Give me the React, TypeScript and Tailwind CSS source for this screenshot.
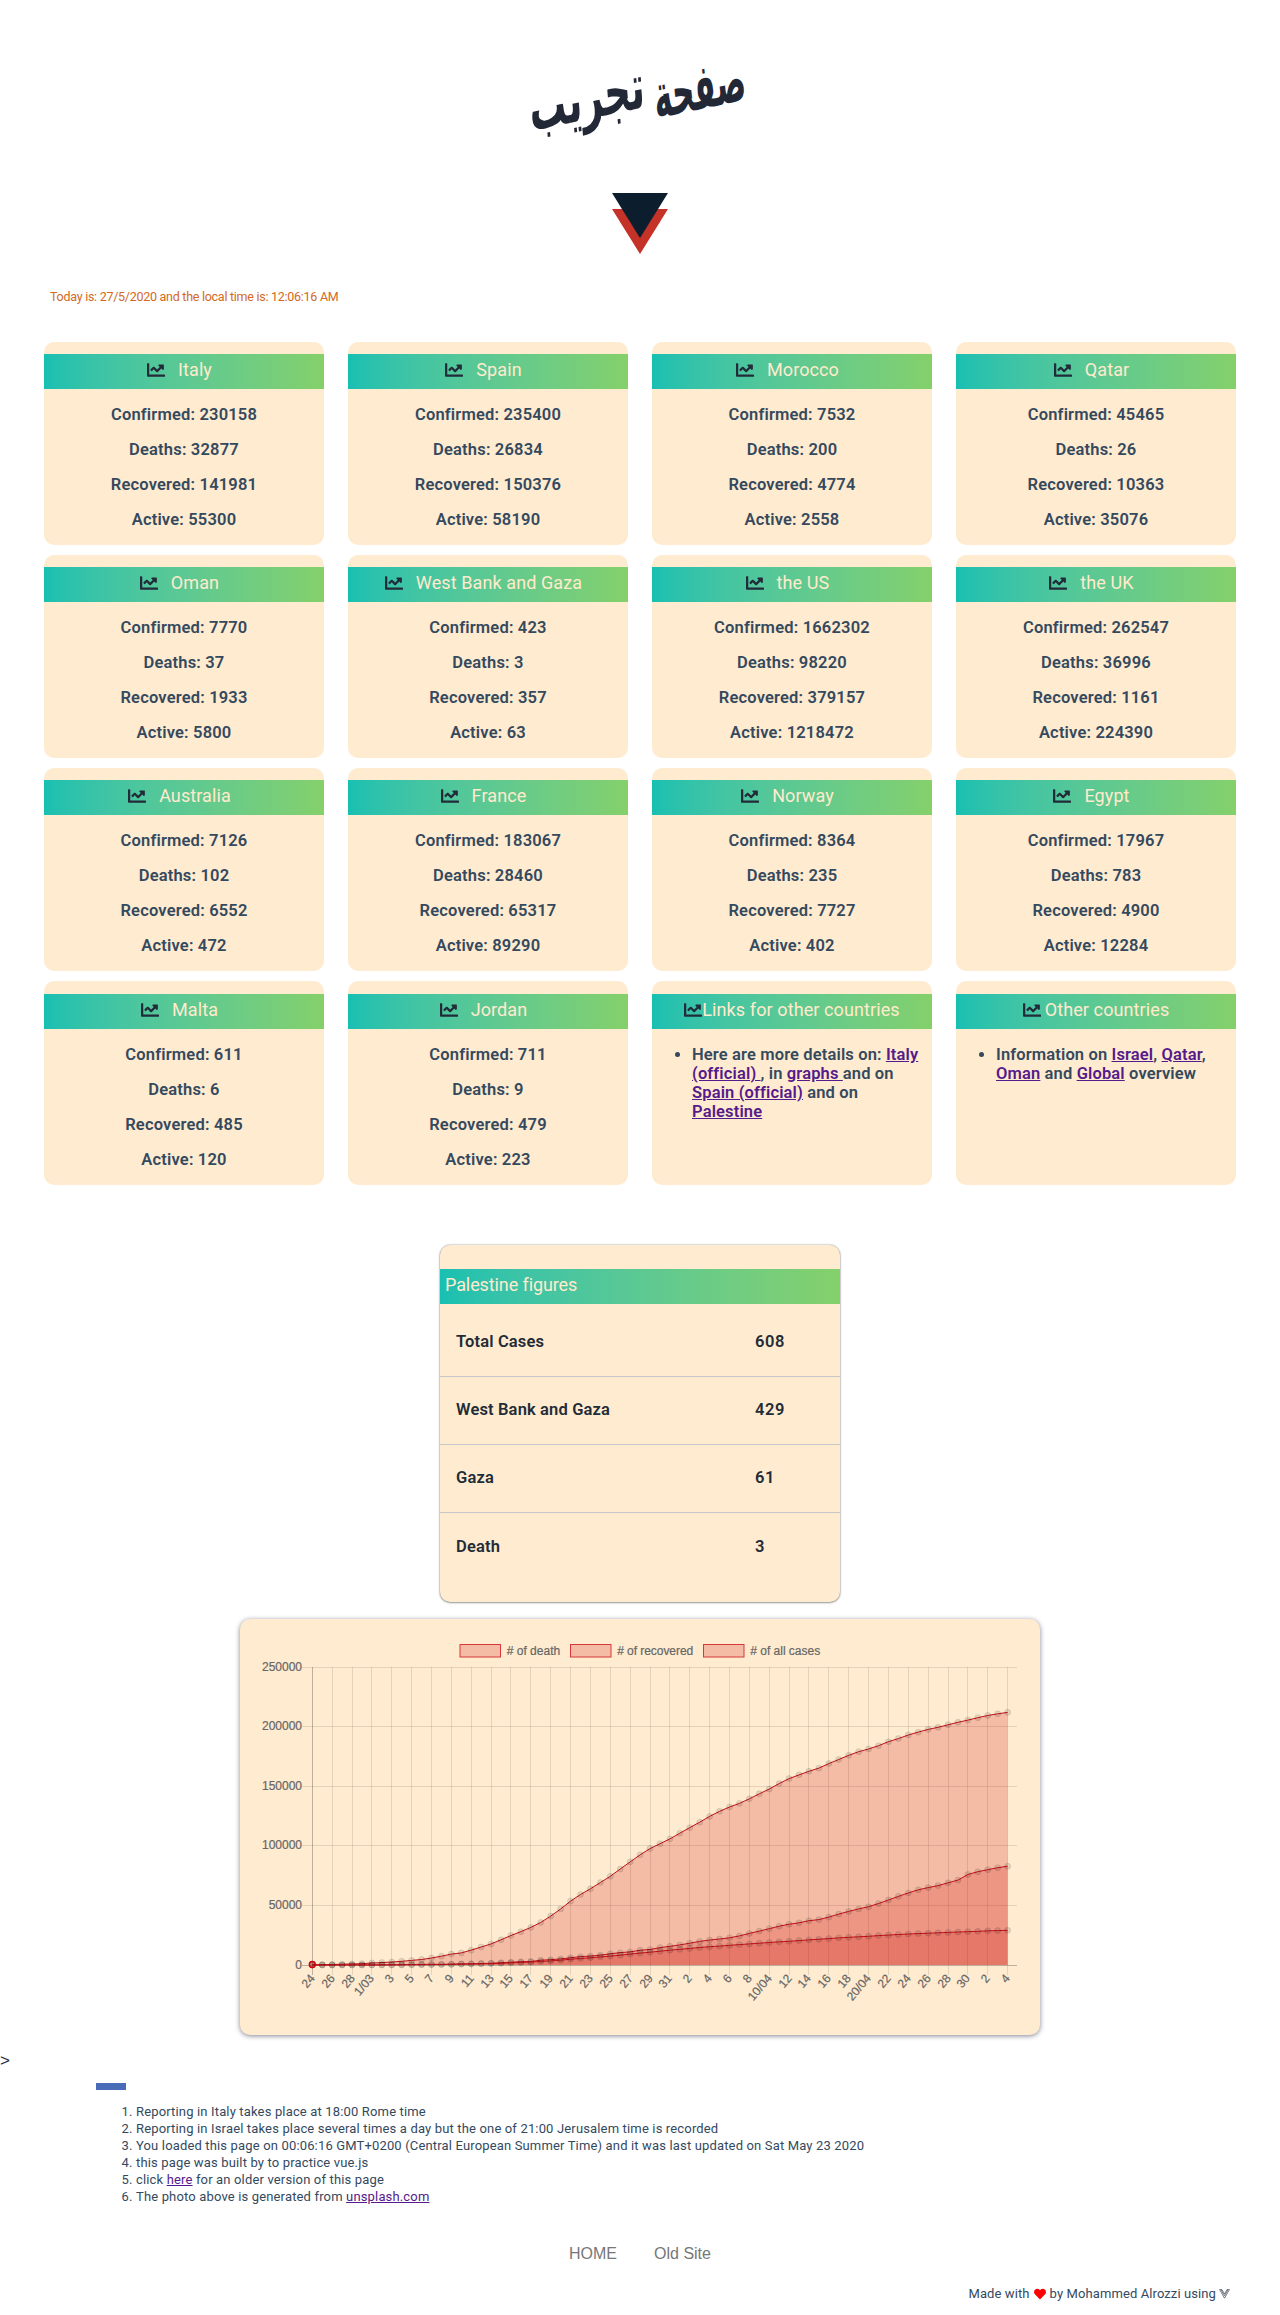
import React from "react";
import { FaChartLine, FaHeart } from "react-icons/fa";

const countries: [string, number, number, number, number][] = [
  ["Italy", 230158, 32877, 141981, 55300],
  ["Spain", 235400, 26834, 150376, 58190],
  ["Morocco", 7532, 200, 4774, 2558],
  ["Qatar", 45465, 26, 10363, 35076],
  ["Oman", 7770, 37, 1933, 5800],
  ["West Bank and Gaza", 423, 3, 357, 63],
  ["the US", 1662302, 98220, 379157, 1218472],
  ["the UK", 262547, 36996, 1161, 224390],
  ["Australia", 7126, 102, 6552, 472],
  ["France", 183067, 28460, 65317, 89290],
  ["Norway", 8364, 235, 7727, 402],
  ["Egypt", 17967, 783, 4900, 12284],
  ["Malta", 611, 6, 485, 120],
  ["Jordan", 711, 9, 479, 223],
];

const allCases = [229,322,400,650,888,1128,1694,2036,2502,3089,3858,4636,5883,7375,9172,10149,12462,15113,17660,21157,24747,27980,31506,35713,41035,47021,53578,59138,63927,69176,74386,80539,86498,92472,97689,101739,105792,110574,115242,119827,124632,128948,132547,135586,139422,143626,147577,152271,156363,159516,162488,165155,168941,172434,175925,178972,181228,183957,187327,189973,192994,195351,197675,199414,201505,203591,205463,207428,209328,210717,211938];
const recovered = [1,1,3,45,46,50,83,149,160,276,414,523,589,622,724,1004,1045,1258,1439,1966,2335,2749,2941,4025,4440,5129,6072,7024,7432,8326,9362,10361,10950,12384,13030,14620,15729,16847,18278,19758,20996,21815,22837,24392,26491,28470,30455,32534,34211,35435,37130,38092,40164,42727,44927,47055,48877,51600,54543,57576,60498,63120,64928,66624,68941,71252,75945,78249,79914,81654,82879];
const deaths = [7,10,12,17,21,29,34,52,79,107,148,197,233,366,463,631,827,1016,1266,1441,1809,2158,2503,2978,3405,4032,4825,5476,6077,6820,7503,8215,9134,10023,10779,11591,12428,13155,13915,14681,15362,15887,16523,17127,17669,18279,18849,19468,19899,20465,21067,21645,22170,22745,23227,23660,24114,24648,25085,25549,25969,26384,26644,26977,27359,27682,27967,28236,28710,28884,29079];
const dayLabels = ["24","26","28","1/03","3","5","7","9","11","13","15","17","19","21","23","25","27","29","31","2","4","6","8","10/04","12","14","16","18","20/04","22","24","26","28","30","2","4"];

const X0 = 72.3;
const Y0 = 346;
const xAt = (i: number) => X0 + i * 9.933;
const yAt = (v: number) => Y0 - (v * 298) / 250000;

function Series({ data }: { data: number[] }) {
  const line = data.map((v, i) => `${xAt(i).toFixed(1)},${yAt(v).toFixed(1)}`).join(" ");
  return (
    <g>
      <polygon points={`${X0},${Y0} ${line} ${xAt(70)},${Y0}`} fill="rgba(204,0,0,0.2)" />
      <polyline points={line} fill="none" stroke="#c8101a" strokeWidth="1" />
      {data.map((v, i) => (
        <circle key={i} cx={xAt(i)} cy={yAt(v)} r="3" fill="rgba(0,0,0,0.1)" stroke="rgba(0,0,0,0.1)" />
      ))}
    </g>
  );
}

function Chart() {
  return (
    <svg width="800" height="416" viewBox="0 0 800 416" className="block font-['Liberation_Sans']">
      {[
        [220, "# of death", 53.5],
        [330.5, "# of recovered", 76],
        [463.5, "# of all cases", 70],
      ].map(([x, label, w]) => (
        <g key={label}>
          <rect x={x} y="25.5" width="40.5" height="12.5" fill="rgba(204,0,0,0.2)" stroke="#d8383a" strokeWidth="1" />
          <text x={Number(x) + 46.7} y="36" fontSize="12" fill="#666" stroke="#666" strokeWidth="0.2" textLength={w}>{label}</text>
        </g>
      ))}
      {[0, 1, 2, 3, 4, 5].map((k) => {
        const y = Math.floor(yAt(k * 50000)) + 0.5;
        return (
          <g key={k}>
            <line x1="62" x2="777" y1={y} y2={y} stroke={k ? "rgba(0,0,0,0.1)" : "rgba(0,0,0,0.25)"} />
            <text x="62" y={y + 3.5} fontSize="12" fill="#666" stroke="#666" strokeWidth="0.2" textAnchor="end">{k * 50000}</text>
          </g>
        );
      })}
      {dayLabels.map((label, k) => {
        const x = Math.floor(xAt(k * 2)) + 0.5;
        return (
          <g key={k}>
            <line x1={x} x2={x} y1="48" y2="356" stroke={k ? "rgba(0,0,0,0.1)" : "rgba(0,0,0,0.25)"} />
            <text transform={`translate(${x} 357) rotate(-50)`} y="4" fontSize="12" fill="#666" stroke="#666" strokeWidth="0.2" textAnchor="end">{label}</text>
          </g>
        );
      })}
      <Series data={allCases} />
      <Series data={recovered} />
      <Series data={deaths} />
      <circle cx={X0} cy={Y0 - 0.5} r="3" fill="rgba(204,0,0,0.2)" stroke="#d0000c" strokeWidth="1.4" />
    </svg>
  );
}

const bar = "flex h-[35px] items-center bg-linear-to-r from-[#17c0b2] to-[#84d06b] text-[18px] text-[#ffebcd]";

function Card({ title, low, iconGap, tail, children }: { title: string; low: boolean; iconGap: string; tail: string; children: React.ReactNode }) {
  return (
    <div className={`rounded-[10px] bg-[#ffebcf] ${low ? "h-[204px] pt-[13px]" : "h-[203px] pt-3"}`}>
      <div className={`${bar} justify-center`}>
        <FaChartLine className={`-mt-1 size-[18px] shrink-0 text-[#222b38] ${iconGap}`} />
        <span className={`-mt-1 tracking-[0.1px] whitespace-nowrap ${tail}`}>{title}</span>
      </div>
      {children}
    </div>
  );
}

function Link({ children }: { children: React.ReactNode }) {
  return <a href="#" className="text-[#551a8b] underline">{children}</a>;
}

export default function App() {
  return (
    <div className="h-[2315px] w-[1280px] overflow-hidden bg-white font-[Roboto,sans-serif] text-[#34495e]">
      <header className="flex flex-col items-center">
        <h1 dir="rtl" className="mr-[5px] flex h-[193px] w-[217px] items-start justify-between pt-[43px] text-[62px] leading-[90px] font-bold text-[#222836] font-['DejaVu_Sans']">
          <span className="flex w-[93px] justify-center">
            <bdi className="block shrink-0 scale-x-[0.5] -rotate-12 -skew-x-12 whitespace-nowrap">صفحة</bdi>
          </span>
          <span className="mt-[10px] flex w-[116px] justify-center">
            <bdi className="block shrink-0 scale-x-[0.6] -rotate-12 -skew-x-12 whitespace-nowrap">تجريب</bdi>
          </span>
        </h1>
        <svg width="56" height="62" viewBox="0 0 56 62" className="block">
          <path d="M0 16H56L28 61Z" fill="#c43228" />
          <path d="M0 0H56L28 45Z" fill="#0c1e2e" />
        </svg>
      </header>
      <p className="mt-[32px] ml-[50px] h-[55px] text-[12.5px] leading-5 tracking-[-0.27px] text-[#d2691e]">Today is: 27/5/2020 and the local time is: 12:06:16 AM</p>

      <main>
        <section className="mx-11 grid grid-cols-4 gap-x-6 gap-y-2.5">
          {countries.map(([name, c, d, r, a], i) => (
            <Card key={name} title={name} low={i > 11} iconGap="mr-[13px]" tail="mr-[9px]">
              <div className="pt-2 text-center text-[16.5px] leading-[35px] font-semibold tracking-[0.18px]">
                <p>Confirmed: {c}</p>
                <p>Deaths: {d}</p>
                <p>Recovered: {r}</p>
                <p>Active: {a}</p>
              </div>
            </Card>
          ))}
          <Card title="Links for other countries" low iconGap="mr-0" tail="mr-0">
            <ul className="mt-4 ml-10 list-disc text-[16.5px] leading-[19px] font-semibold tracking-[0.14px] whitespace-nowrap">
              <li>Here are more details on: <Link>Italy<br />(official) </Link>, in <Link>graphs </Link>and on<br /><Link>Spain (official)</Link> and on<br /><Link>Palestine</Link></li>
            </ul>
          </Card>
          <Card title="Other countries" low iconGap="mr-1" tail="mr-0">
            <ul className="mt-4 ml-10 list-disc text-[16.5px] leading-[19px] font-semibold tracking-[0.14px] whitespace-nowrap">
              <li>Information on <Link>Israel</Link>, <Link>Qatar</Link>,<br /><Link>Oman</Link> and <Link>Global</Link> overview</li>
            </ul>
          </Card>
        </section>

        <section className="mx-auto mt-[60px] h-[357px] w-[400px] rounded-[10px] bg-[#ffebcf] pt-6 shadow-[0_0_2px_rgba(0,0,0,0.45),0_1px_2px_rgba(0,0,0,0.3)]">
          <h2 className={`${bar} pb-1 pl-[5px] tracking-[-0.1px]`}>Palestine figures</h2>
          <dl className="pt-[5px] text-[16.5px] font-semibold tracking-[0.15px] text-[#222b38]">
            {[["Total Cases", 608], ["West Bank and Gaza", 429], ["Gaza", 61], ["Death", 3]].map(([k, v]) => (
              <div key={k} className="flex h-[68px] items-center border-b border-[#c8c8cc] pl-4 last:border-b-0">
                <dt className="w-[299px]">{k}</dt>
                <dd className="tracking-[0.6px]">{v}</dd>
              </div>
            ))}
          </dl>
        </section>

        <section className="mx-auto mt-[17px] h-[416px] w-[800px] rounded-[10px] bg-[#ffebcf] shadow-[0_1px_5px_rgba(30,30,60,0.55)]">
          <Chart />
        </section>
      </main>

      <p className="mt-[14px] h-6 text-[17px] leading-6 text-[#222b38] font-['Liberation_Sans']">&gt;</p>
      <div className="mt-[10px] ml-24 h-[7px] w-[30px] bg-[#4a6cb8]" />
      <ol className="mt-[13px] ml-[136px] list-decimal text-[13px] leading-[17px] tracking-[0.155px]">
        <li>Reporting in Italy takes place at 18:00 Rome time</li>
        <li>Reporting in Israel takes place several times a day but the one of 21:00 Jerusalem time is recorded</li>
        <li>You loaded this page on 00:06:16 GMT+0200 (Central European Summer Time) and it was last updated on Sat May 23 2020</li>
        <li>this page was built by to practice vue.js</li>
        <li>click <Link>here</Link> for an older version of this page</li>
        <li>The photo above is generated from <Link>unsplash.com</Link></li>
      </ol>
      <nav className="mt-[37px] flex h-6 items-center justify-center gap-[37px] text-base text-[#777] font-['Liberation_Sans']">
        <a href="#">HOME</a>
        <a href="#">Old Site</a>
      </nav>
      <footer className="mt-[18px] mr-[50px] flex h-5 items-center justify-end text-[13px] tracking-[0.1px]">
        <span>Made with</span>
        <FaHeart className="mx-1 size-3 text-[#f00]" />
        <span>by Mohammed Alrozzi using</span>
        <svg width="11" height="10" viewBox="0 0 11 10" className="ml-[3px]" fill="none" stroke="#222b38" strokeWidth="0.6">
          <path d="M.6.6H3L5.5 5 8 .6h2.4L5.5 9.2ZM2 .8l3.5 6L9 .8" />
        </svg>
      </footer>
    </div>
  );
}
